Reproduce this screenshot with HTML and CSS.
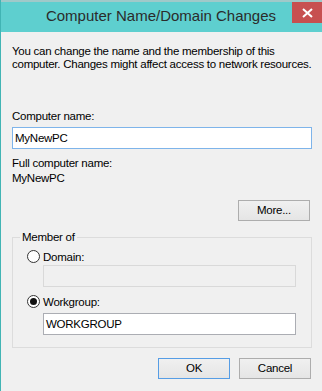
FILE: index.html
```html
<!DOCTYPE html>
<html>
<head>
<meta charset="utf-8">
<link rel="stylesheet" href="styles.css">
</head>
<body>
<div class="window">
  <div class="titlebar">
    <div class="title">Computer Name/Domain Changes</div>
    <div class="close">
      <svg width="11" height="10" viewBox="0 0 11 10"><path d="M1 1 L10 9 M10 1 L1 9" stroke="#fff" stroke-width="2" fill="none"/></svg>
    </div>
  </div>
  <div class="content">
    <p class="intro">You can change the name and the membership of this<br>computer. Changes might affect access to network resources.</p>
    <div class="label first">Computer name:</div>
    <div class="textbox focus">MyNewPC</div>
    <div class="label full">Full computer name:</div>
    <div class="label">MyNewPC</div>
    <div class="morerow"><div class="btn">More...</div></div>
    <div class="group">
      <div class="legend">Member of</div>
      <div class="radio-row"><span class="radio"></span><span>Domain:</span></div>
      <div class="textbox disabled"></div>
      <div class="radio-row second"><span class="radio checked"></span><span>Workgroup:</span></div>
      <div class="textbox plain">WORKGROUP</div>
    </div>
    <div class="buttons">
      <div class="btn default">OK</div>
      <div class="btn">Cancel</div>
    </div>
  </div>
</div>
</body>
</html>
```
FILE: styles.css
```css
html, body {
  margin: 0;
  padding: 0;
}
body {
  background: #f0f0f0;
  font-family: "Liberation Sans", Arial, sans-serif;
  font-size: 11.5px;
  letter-spacing: -0.25px;
  color: #000;
}
.window {
  width: 321px;
  height: 391px;
  border-left: 1px solid #41b4b4;
  background: #f0f0f0;
  position: relative;
}
.titlebar {
  height: 30px;
  border-top: 2px solid #9fc9c9;
  background: #5ecfcf;
  display: flex;
  align-items: center;
  justify-content: center;
}
.title {
  font-family: "Liberation Sans", Arial, sans-serif;
  font-size: 15px;
  letter-spacing: 0;
  color: #2b2b2b;
  margin-top: -4px;
  margin-left: -1px;
}
.close {
  position: absolute;
  top: 2px;
  right: 0;
  width: 30px;
  height: 21px;
  background: #c75050;
  display: flex;
  align-items: center;
  justify-content: center;
}
.content {
  padding: 0 10px 0 11px;
}
.intro {
  margin: 13px 0 0 0;
  line-height: 13px;
  white-space: nowrap;
}
.label {
  line-height: 13px;
  height: 15px;
}
.label.first {
  margin-top: 39px;
  height: 17px;
}
.label.full {
  margin-top: 8px;
}
.textbox {
  height: 20px;
  border: 1px solid #abadb3;
  background: #fff;
  line-height: 20px;
  padding-left: 2px;
  box-sizing: content-box;
}
.textbox.focus {
  border-color: #7eb4ea;
}
.textbox.disabled {
  background: #f0f0f0;
  border-color: #d9d9d9;
}
.morerow {
  display: flex;
  justify-content: flex-end;
  margin-top: 13px;
  padding-right: 2px;
}
.btn {
  width: 70px;
  height: 19px;
  border: 1px solid #adadad;
  background: linear-gradient(#f0f0f0, #e5e5e5);
  text-align: center;
  line-height: 19px;
}
.btn.default {
  border-color: #569de5;
}
.group {
  margin-top: 16px;
  border: 1px solid #dcdcdc;
  height: 109px;
  position: relative;
  padding: 0 15px 0 30px;
}
.legend {
  position: absolute;
  top: -8px;
  left: 7px;
  padding: 0 2px;
  background: #f0f0f0;
  line-height: 14px;
}
.radio-row {
  display: flex;
  align-items: center;
  height: 13px;
  margin-top: 12px;
  margin-left: -16px;
  gap: 3px;
}
.radio-row.second {
  margin-top: 8px;
}
.radio {
  width: 11px;
  height: 11px;
  border: 1px solid #333;
  border-radius: 50%;
  background: #fff;
  position: relative;
}
.radio.checked::after {
  content: "";
  position: absolute;
  left: 2px;
  top: 2px;
  width: 7px;
  height: 7px;
  border-radius: 50%;
  background: #111;
}
.group .textbox {
  margin-top: 2px;
}
.group .textbox.plain {
  margin-top: 5px;
}
.buttons {
  display: flex;
  justify-content: flex-end;
  gap: 9px;
  margin-top: 10px;
  padding-right: 1px;
}
```
